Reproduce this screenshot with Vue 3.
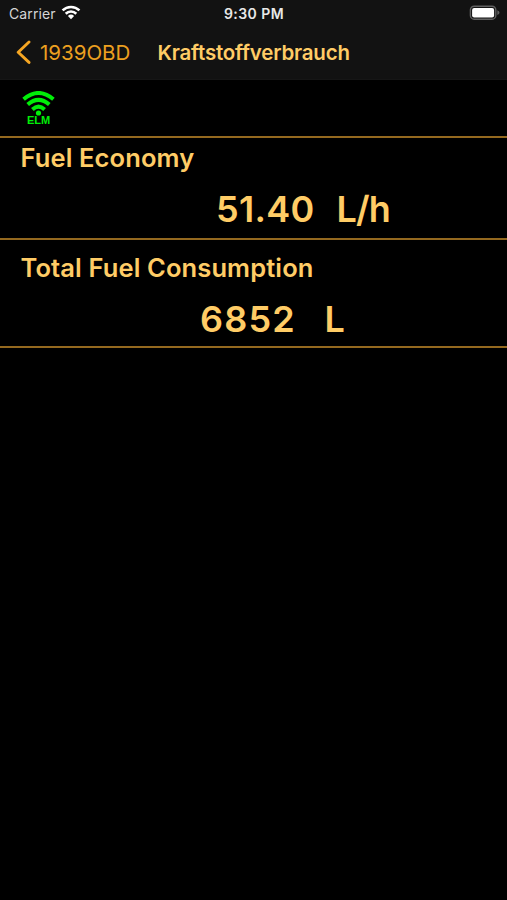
<script setup>
const readings = [
  { id: 'economy', label: 'Fuel Economy', value: '51.40', unit: 'L/h' },
  { id: 'total', label: 'Total Fuel Consumption', value: '6852', unit: 'L' },
]
</script>

<template>
  <div class="screen">
    <header class="top">
      <div class="status">
        <div class="carrier">
          <span class="carrier-name">Carrier</span>
          <svg class="wifi" width="20" height="15" viewBox="0 0 20 15">
            <g fill="none" stroke="#fff" stroke-width="2.6">
              <path d="M1.6 5.4a12 12 0 0 1 16.8 0" />
              <path d="M4.7 8.7a7.6 7.6 0 0 1 10.6 0" />
            </g>
            <path d="M6.9 11a4.5 4.5 0 0 1 6.2 0L10 14.2z" fill="#fff" />
          </svg>
        </div>
        <span class="time">9:30 PM</span>
        <svg class="battery" width="32" height="16" viewBox="0 0 32 16">
          <rect x="1.4" y="1.2" width="25.4" height="13" rx="3.8" fill="none" stroke="#606060" stroke-width="1.4" />
          <rect x="3.1" y="2.9" width="22" height="9.6" rx="2" fill="#fff" />
          <path d="M28.3 5.3q2.2 1 2.2 2.4t-2.2 2.4z" fill="#606060" />
        </svg>
      </div>
      <nav class="nav">
        <a class="back">
          <svg width="16" height="26" viewBox="0 0 16 26">
            <path d="M14 3L3.2 13.2L14 23.4" fill="none" stroke="#f5a623" stroke-width="2.9" stroke-linecap="round" stroke-linejoin="round" />
          </svg>
          <span class="back-text">1939OBD</span>
        </a>
        <h1 class="title">Kraftstoffverbrauch</h1>
      </nav>
    </header>

    <div class="adapter">
      <svg width="36" height="25" viewBox="0 0 36 25">
        <g fill="none" stroke="#00ee08" stroke-width="4">
          <path d="M2.6 8.2q14.9-12.4 29.8 0" />
          <path d="M6.7 13.6q10.8-9.4 21.6 0" />
          <path d="M11.4 18.5q6.1-5.8 12.2 0" />
        </g>
        <circle cx="17.5" cy="22" r="2.6" fill="#00ee08" />
      </svg>
      <span class="adapter-name">ELM</span>
    </div>

    <main>
      <section v-for="r in readings" :key="r.id" class="reading" :class="r.id">
        <h2 class="label">{{ r.label }}</h2>
        <div class="row">
          <span class="value">{{ r.value }}</span>
          <span class="unit">{{ r.unit }}</span>
        </div>
      </section>
    </main>
  </div>
</template>

<style>
body {
  margin: 0;
  background: #000;
}
</style>

<style scoped>
.screen {
  width: 507px;
  height: 900px;
  overflow: hidden;
  background: #000;
  color: #ffcc66;
  font-family: Inter, "Liberation Sans", sans-serif;
}
.top {
  box-sizing: border-box;
  height: 80px;
  background: #121212;
  border-bottom: 1px solid #161616;
}
.status {
  display: grid;
  grid-template-columns: 1fr auto 1fr;
  align-items: center;
  height: 28px;
  padding: 0 6px 0 9px;
  color: #e8e8e8;
}
.carrier {
  display: flex;
  align-items: center;
  gap: 5px;
}
.carrier-name {
  font-size: 14px;
  letter-spacing: 0.12px;
  line-height: 28px;
  color: #d5d5d5;
}
.wifi {
  margin-top: -3px;
}
.time {
  margin-left: -2px;
  font-size: 14px;
  font-weight: 600;
  letter-spacing: 0.45px;
  line-height: 28px;
}
.battery {
  justify-self: end;
  margin-top: -2px;
}
.nav {
  display: flex;
  align-items: center;
  height: 48px;
  padding-left: 15px;
}
.back {
  display: flex;
  align-items: center;
  gap: 9px;
  width: 142px;
  color: #eda020;
}
.back-text {
  font-size: 20.5px;
}
.title {
  margin: 0 0 0 0.5px;
  font-size: 20.5px;
  font-weight: 600;
  letter-spacing: -0.2px;
}
.adapter {
  box-sizing: border-box;
  display: flex;
  flex-direction: column;
  align-items: center;
  width: 36px;
  height: 56px;
  margin-left: 21px;
  padding-top: 11px;
}
.adapter svg {
  flex: none;
}
.adapter-name {
  color: #00ee08;
  font: bold 11px/11px "Liberation Sans", sans-serif;
  margin: -1px 1px 0 0;
}
.reading {
  box-sizing: border-box;
  border-top: 2px solid #94691f;
}
.economy {
  height: 102px;
  padding-top: 5px;
}
.total {
  height: 110px;
  padding-top: 13px;
  border-bottom: 2px solid #94691f;
}
.label {
  margin: 0 0 0 20.5px;
  font-size: 25.5px;
  font-weight: 630;
  letter-spacing: 0.12px;
  line-height: 30px;
}
.row {
  display: flex;
  align-items: baseline;
  font-size: 36px;
  font-weight: 630;
  line-height: 72px;
  height: 64px;
}
.economy .row {
  padding-left: 216px;
  gap: 22px;
}
.economy .value {
  letter-spacing: 0.3px;
}
.economy .unit {
  letter-spacing: -0.9px;
}
.total .row {
  padding-left: 200px;
  gap: 28.5px;
}
.total .value {
  letter-spacing: 1.2px;
}
</style>
